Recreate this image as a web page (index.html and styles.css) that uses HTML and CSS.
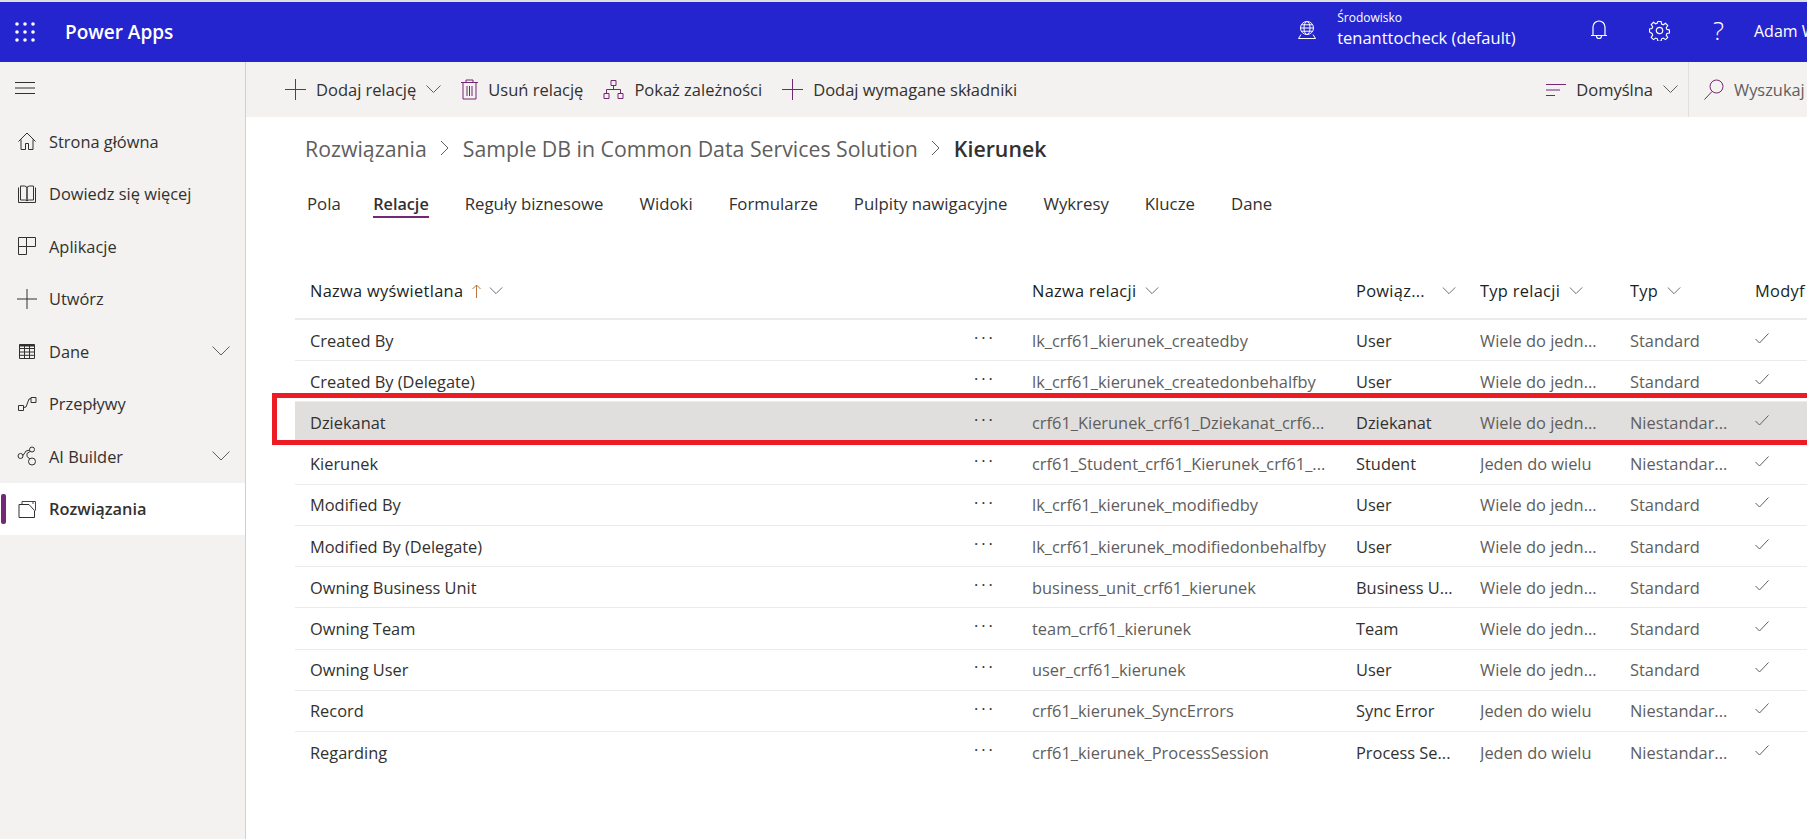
FILE: index.html
```html
<!DOCTYPE html>
<html lang="pl">
<head>
  <meta charset="UTF-8">
  <title>Kierunek | Power Apps</title>
  <link rel="stylesheet" href="styles.css">
</head>
<body>
  <!-- Top bar -->
  <header class="topbar">
    <svg class="waffle" width="20" height="20" viewBox="0 0 20 20" fill="#fff">
      <circle cx="2" cy="2" r="1.8"/><circle cx="10" cy="2" r="1.8"/><circle cx="18" cy="2" r="1.8"/>
      <circle cx="2" cy="10" r="1.8"/><circle cx="10" cy="10" r="1.8"/><circle cx="18" cy="10" r="1.8"/>
      <circle cx="2" cy="18" r="1.8"/><circle cx="10" cy="18" r="1.8"/><circle cx="18" cy="18" r="1.8"/>
    </svg>
    <span class="app-name">Power Apps</span>
    <svg class="env-icon" width="20" height="20" viewBox="0 0 20 20" fill="none" stroke="#fff">
      <circle cx="10" cy="8" r="6.5"/><ellipse cx="10" cy="8" rx="3" ry="6.5"/>
      <path d="M3.5 8h13M4.5 4.8h11M4.5 11.2h11M4 14.5l-2.5 4h17l-2.5-4"/>
    </svg>
    <div class="env">
      <span class="env-label">Środowisko</span>
      <span class="env-name">tenanttocheck (default)</span>
    </div>
    <svg class="bell" width="18" height="22" viewBox="0 0 18 22" fill="none" stroke="#fff" stroke-width="1.2">
      <path d="M3 16V8a6 6 0 0 1 12 0v8M1 16.5h16M6.5 17a2.500 2.500 0 0 0 5 0"/>
    </svg>
    <svg class="gear" width="21" height="21" viewBox="0 0 21 21" fill="none" stroke="#fff" stroke-width="1.2">
      <circle cx="10.5" cy="10.5" r="3.2"/>
      <path d="M8.8 1h3.4l.5 2.7 1.8.8 2.3-1.6 2.4 2.4-1.6 2.3.8 1.8 2.6.5v3.2l-2.6.5-.8 1.8 1.6 2.3-2.4 2.4-2.3-1.6-1.8.8-.5 2.6H8.8l-.5-2.6-1.8-.8-2.3 1.6-2.4-2.4 1.6-2.3-.8-1.8L0 12.1V8.9l2.6-.5.8-1.8-1.6-2.3 2.4-2.4 2.3 1.6 1.8-.8z" transform="translate(.5 .5) scale(.95)"/>
    </svg>
    <span class="help">?</span>
    <span class="user">Adam W</span>
  </header>

  <div class="app">
    <!-- Left navigation -->
    <nav class="sidebar">
      <svg class="hamburger" width="20" height="14" viewBox="0 0 20 14" stroke="#323130">
        <path d="M0 1.5h20M0 7h20M0 12.5h20"/>
      </svg>
      <a class="nav-item">
        <svg width="20" height="20" viewBox="0 0 20 20" fill="none" stroke="#323130"><path d="M1.5 10.5 10 2l8.5 8.500M4 8.500v10h4.500v-6h3v6H16v-10"/></svg>
        <span>Strona główna</span>
      </a>
      <a class="nav-item">
        <svg width="20" height="20" viewBox="0 0 20 20" fill="none" stroke="#323130"><path d="M1.500 3.500v15h17v-15M3.500 2h4a2.500 2.500 0 0 1 2.500 2.500V17a2.500 2.500 0 0 0-2.500-1h-4zM16.500 2h-4A2.500 2.500 0 0 0 10 4.500V17a2.500 2.500 0 0 1 2.500-1h4z"/></svg>
        <span>Dowiedz się więcej</span>
      </a>
      <a class="nav-item">
        <svg width="20" height="20" viewBox="0 0 20 20" fill="none" stroke="#323130"><path d="M1.500 1.500h17v9h-9v8h-8zM9.500 1.500v9h-8"/></svg>
        <span>Aplikacje</span>
      </a>
      <a class="nav-item">
        <svg width="20" height="20" viewBox="0 0 20 20" fill="none" stroke="#323130"><path d="M10 0v20M0 10h20"/></svg>
        <span>Utwórz</span>
      </a>
      <a class="nav-item">
        <svg width="20" height="20" viewBox="0 0 20 20" fill="none" stroke="#323130"><path d="M2.500 3.500h15v14h-15zM2.500 7.500h15M2.500 11h15M2.500 14.300h15M7.500 3.500v14M12.500 3.500v14"/><path d="M2.500 4.500h15" stroke-width="2"/></svg>
        <span>Dane</span>
        <svg class="nav-chevron" width="18" height="10" viewBox="0 0 18 10" fill="none" stroke="#605e5c"><path d="M.5.500 9 9l8.500-8.500"/></svg>
      </a>
      <a class="nav-item">
        <svg width="20" height="20" viewBox="0 0 20 20" fill="none" stroke="#323130"><path d="M1.500 11.500h5v5h-5zM14 3.500h5v5h-5zM6.500 13.500 9 13l3-8 2-.5"/></svg>
        <span>Przepływy</span>
      </a>
      <a class="nav-item">
        <svg width="20" height="20" viewBox="0 0 20 20" fill="none" stroke="#323130"><circle cx="3.500" cy="10" r="2.500"/><circle cx="15" cy="3.500" r="2.500"/><circle cx="15" cy="15.500" r="3.500"/><path d="M6 9.500l3-4.500 4-1M13 5.500l-3 2v3l3 2.500"/></svg>
        <span>AI Builder</span>
        <svg class="nav-chevron" width="18" height="10" viewBox="0 0 18 10" fill="none" stroke="#605e5c"><path d="M.5.500 9 9l8.500-8.500"/></svg>
      </a>
      <a class="nav-item nav-active">
        <svg width="20" height="20" viewBox="0 0 20 20" fill="none" stroke="#323130"><path d="M2 5.500h10l5.500 6v7H2z"/><path d="M5 5V2.500h11V5M16 2.500h2.500v9" stroke="#742774"/></svg>
        <span>Rozwiązania</span>
      </a>
    </nav>

    <main class="content">
      <!-- Command bar -->
      <div class="commands">
        <button class="cmd">
          <svg width="21" height="21" viewBox="0 0 21 21" stroke="#742774"><path d="M10.500 0v21M0 10.500h21"/></svg>
          Dodaj relację
          <svg class="cmd-chevron" width="15" height="9" viewBox="0 0 15 9" fill="none" stroke="#605e5c"><path d="M.5.500l7 7 7-7"/></svg>
        </button>
        <button class="cmd">
          <svg width="17" height="21" viewBox="0 0 17 21" fill="none" stroke="#742774"><path d="M0 3.500h17M5 3.500V1h7v2.500M2 3.500V20h13V3.500M6 7v10M8.500 7v10M11 7v10"/></svg>
          Usuń relację
        </button>
        <button class="cmd">
          <svg width="21" height="21" viewBox="0 0 21 21" fill="none" stroke="#742774"><path d="M8 1.500h5v5H8zM1 14.500h5v5H1zM15 14.500h5v5h-5zM10.500 6.500v4M3.500 14.500v-4h14v4"/></svg>
          Pokaż zależności
        </button>
        <button class="cmd">
          <svg width="21" height="21" viewBox="0 0 21 21" stroke="#742774"><path d="M10.500 0v21M0 10.500h21"/></svg>
          Dodaj wymagane składniki
        </button>
        <button class="cmd cmd-view">
          <svg width="20" height="14" viewBox="0 0 20 14" stroke="#742774"><path d="M0 1.500h20M0 7h14M0 12.500h9"/></svg>
          Domyślna
          <svg class="cmd-chevron" width="15" height="9" viewBox="0 0 15 9" fill="none" stroke="#605e5c"><path d="M.5.500l7 7 7-7"/></svg>
        </button>
        <div class="search">
          <svg width="20" height="21" viewBox="0 0 20 21" fill="none" stroke="#742774"><circle cx="12.500" cy="7.500" r="6.500"/><path d="M8 12.500.5 20.500"/></svg>
          Wyszukaj
        </div>
      </div>

      <div class="page">
        <div class="breadcrumb">
          <span>Rozwiązania</span>
          <svg width="10" height="16" viewBox="0 0 10 16" fill="none" stroke="#605e5c"><path d="M1 1l7 7-7 7"/></svg>
          <span>Sample DB in Common Data Services Solution</span>
          <svg width="10" height="16" viewBox="0 0 10 16" fill="none" stroke="#605e5c"><path d="M1 1l7 7-7 7"/></svg>
          <span class="crumb-current">Kierunek</span>
        </div>

        <div class="tabs">
          <a class="tab">Pola</a>
          <a class="tab tab-active">Relacje</a>
          <a class="tab">Reguły biznesowe</a>
          <a class="tab">Widoki</a>
          <a class="tab">Formularze</a>
          <a class="tab">Pulpity nawigacyjne</a>
          <a class="tab">Wykresy</a>
          <a class="tab">Klucze</a>
          <a class="tab">Dane</a>
        </div>

        <div class="grid">
          <div class="row head">
            <div class="c-name">Nazwa wyświetlana
              <svg class="sort" width="9" height="14" viewBox="0 0 9 14" fill="none" stroke="#b5763f"><path d="M4.500 14V1M.5 5l4-4 4 4"/></svg>
              <svg width="14" height="8" viewBox="0 0 15 9" fill="none" stroke="#605e5c"><path d="M.5.500l7 7 7-7"/></svg></div>
            <div></div>
            <div>Nazwa relacji <svg width="14" height="8" viewBox="0 0 15 9" fill="none" stroke="#605e5c"><path d="M.5.500l7 7 7-7"/></svg></div>
            <div class="c-linked">Powiąz...<svg width="14" height="8" viewBox="0 0 15 9" fill="none" stroke="#605e5c"><path d="M.5.500l7 7 7-7"/></svg></div>
            <div>Typ relacji <svg width="14" height="8" viewBox="0 0 15 9" fill="none" stroke="#605e5c"><path d="M.5.500l7 7 7-7"/></svg></div>
            <div>Typ <svg width="14" height="8" viewBox="0 0 15 9" fill="none" stroke="#605e5c"><path d="M.5.500l7 7 7-7"/></svg></div>
            <div>Modyf</div>
          </div>

          <div class="row">
            <div>Created By</div><div class="more">···</div><div class="muted">lk_crf61_kierunek_createdby</div><div>User</div><div class="muted">Wiele do jedn...</div><div class="muted">Standard</div>
            <div><svg class="check" width="14" height="11" viewBox="0 0 14 11" fill="none" stroke="#605e5c"><path d="M.5 6l4 4 9-9.500"/></svg></div>
          </div>
          <div class="row">
            <div>Created By (Delegate)</div><div class="more">···</div><div class="muted">lk_crf61_kierunek_createdonbehalfby</div><div>User</div><div class="muted">Wiele do jedn...</div><div class="muted">Standard</div>
            <div><svg class="check" width="14" height="11" viewBox="0 0 14 11" fill="none" stroke="#605e5c"><path d="M.5 6l4 4 9-9.500"/></svg></div>
          </div>
          <div class="row row-selected">
            <div>Dziekanat</div><div class="more">···</div><div class="muted">crf61_Kierunek_crf61_Dziekanat_crf6...</div><div>Dziekanat</div><div class="muted">Wiele do jedn...</div><div class="muted">Niestandar...</div>
            <div><svg class="check" width="14" height="11" viewBox="0 0 14 11" fill="none" stroke="#605e5c"><path d="M.5 6l4 4 9-9.500"/></svg></div>
          </div>
          <div class="row">
            <div>Kierunek</div><div class="more">···</div><div class="muted">crf61_Student_crf61_Kierunek_crf61_...</div><div>Student</div><div class="muted">Jeden do wielu</div><div class="muted">Niestandar...</div>
            <div><svg class="check" width="14" height="11" viewBox="0 0 14 11" fill="none" stroke="#605e5c"><path d="M.5 6l4 4 9-9.500"/></svg></div>
          </div>
          <div class="row">
            <div>Modified By</div><div class="more">···</div><div class="muted">lk_crf61_kierunek_modifiedby</div><div>User</div><div class="muted">Wiele do jedn...</div><div class="muted">Standard</div>
            <div><svg class="check" width="14" height="11" viewBox="0 0 14 11" fill="none" stroke="#605e5c"><path d="M.5 6l4 4 9-9.500"/></svg></div>
          </div>
          <div class="row">
            <div>Modified By (Delegate)</div><div class="more">···</div><div class="muted">lk_crf61_kierunek_modifiedonbehalfby</div><div>User</div><div class="muted">Wiele do jedn...</div><div class="muted">Standard</div>
            <div><svg class="check" width="14" height="11" viewBox="0 0 14 11" fill="none" stroke="#605e5c"><path d="M.5 6l4 4 9-9.500"/></svg></div>
          </div>
          <div class="row">
            <div>Owning Business Unit</div><div class="more">···</div><div class="muted">business_unit_crf61_kierunek</div><div>Business U...</div><div class="muted">Wiele do jedn...</div><div class="muted">Standard</div>
            <div><svg class="check" width="14" height="11" viewBox="0 0 14 11" fill="none" stroke="#605e5c"><path d="M.5 6l4 4 9-9.500"/></svg></div>
          </div>
          <div class="row">
            <div>Owning Team</div><div class="more">···</div><div class="muted">team_crf61_kierunek</div><div>Team</div><div class="muted">Wiele do jedn...</div><div class="muted">Standard</div>
            <div><svg class="check" width="14" height="11" viewBox="0 0 14 11" fill="none" stroke="#605e5c"><path d="M.5 6l4 4 9-9.500"/></svg></div>
          </div>
          <div class="row">
            <div>Owning User</div><div class="more">···</div><div class="muted">user_crf61_kierunek</div><div>User</div><div class="muted">Wiele do jedn...</div><div class="muted">Standard</div>
            <div><svg class="check" width="14" height="11" viewBox="0 0 14 11" fill="none" stroke="#605e5c"><path d="M.5 6l4 4 9-9.500"/></svg></div>
          </div>
          <div class="row">
            <div>Record</div><div class="more">···</div><div class="muted">crf61_kierunek_SyncErrors</div><div>Sync Error</div><div class="muted">Jeden do wielu</div><div class="muted">Niestandar...</div>
            <div><svg class="check" width="14" height="11" viewBox="0 0 14 11" fill="none" stroke="#605e5c"><path d="M.5 6l4 4 9-9.500"/></svg></div>
          </div>
          <div class="row row-last">
            <div>Regarding</div><div class="more">···</div><div class="muted">crf61_kierunek_ProcessSession</div><div>Process Se...</div><div class="muted">Jeden do wielu</div><div class="muted">Niestandar...</div>
            <div><svg class="check" width="14" height="11" viewBox="0 0 14 11" fill="none" stroke="#605e5c"><path d="M.5 6l4 4 9-9.500"/></svg></div>
          </div>

          <!-- red annotation drawn over the screenshot -->
          <div class="callout"></div>
        </div>
      </div>
    </main>
  </div>
</body>
</html>
```

FILE: styles.css
```css
* {
  box-sizing: border-box;
}

html, body {
  height: 100%;
}

body {
  margin: 0;
  overflow: hidden;
  padding-top: 2px;
  background: #e1dfdd;
  font-family: "Open Sans", "Liberation Sans", sans-serif;
  font-size: 16.400px;
  color: #323130;
}

svg {
  flex: none;
}

/* top bar */
.topbar {
  display: flex;
  align-items: center;
  height: 60px;
  padding-left: 15px;
  background: #2525cf;
  color: #fff;
  white-space: nowrap;
  overflow: hidden;
}

.app-name {
  margin-left: 30px;
  font-size: 19px;
  font-weight: 600;
}

.env-icon {
  margin-left: auto;
  margin-bottom: 4px;
}

.env {
  display: flex;
  flex-direction: column;
  margin-left: 20px;
  margin-bottom: 6px;
  line-height: 18px;
}

.env-label {
  font-size: 12px;
}

.env-name {
  font-size: 16.500px;
  line-height: 22px;
}

.bell {
  margin-left: 74px;
  margin-bottom: 4px;
}

.gear {
  margin-left: 41px;
  margin-bottom: 4px;
}

.help {
  margin-left: 43.500px;
  margin-bottom: 4px;
  font-size: 26px;
  font-weight: 300;
}

.user {
  flex: none;
  width: 53px;
  margin-left: 30px;
  margin-bottom: 2px;
  font-size: 16px;
}

.app {
  display: flex;
  height: 777px;
  background: #fff;
}

/* sidebar */
.sidebar {
  flex: none;
  width: 246px;
  padding-top: 19px;
  background: #f3f2f1;
  border-right: 1px solid #d2d0ce;
}

.hamburger {
  display: block;
  margin: 0 0 20px 15px;
}

.nav-item {
  display: flex;
  align-items: center;
  height: 52.500px;
  padding-left: 17px;
}

.nav-item span {
  margin-left: 12px;
}

.nav-chevron {
  margin-left: auto;
  margin-right: 15px;
}

.nav-active {
  position: relative;
  background: #fff;
  font-weight: 600;
}

.nav-active::before {
  content: "";
  position: absolute;
  left: 1px;
  top: 11px;
  width: 5px;
  height: 30px;
  border-radius: 2px;
  background: #742774;
}

/* command bar */
.content {
  flex: 1;
  min-width: 0;
}

.commands {
  display: flex;
  align-items: center;
  height: 55px;
  padding-left: 39px;
  background: #f3f2f1;
}

.cmd {
  display: flex;
  align-items: center;
  gap: 10px;
  margin-right: 20px;
  padding: 0;
  border: none;
  background: none;
  font: inherit;
  font-size: 16.500px;
  color: #323130;
  white-space: nowrap;
}

.cmd-view {
  margin-left: auto;
  margin-right: 0;
}

.search {
  display: flex;
  align-items: center;
  gap: 10px;
  flex: none;
  width: 119px;
  height: 100%;
  margin-left: 10px;
  padding-left: 15px;
  border-left: 1px solid #e1dfdd;
  color: #605e5c;
  white-space: nowrap;
}

/* breadcrumb and tabs */
.page {
  padding-left: 49px;
}

.breadcrumb {
  display: flex;
  align-items: center;
  gap: 13px;
  height: 62px;
  margin-bottom: 2px;
  padding-left: 10px;
  font-size: 21.300px;
  color: #605e5c;
  white-space: nowrap;
}

.crumb-current {
  font-weight: 600;
  color: #323130;
}

.tabs {
  display: flex;
  gap: 36px;
  height: 82px;
  padding-left: 12px;
  padding-top: 9px;
  font-size: 16.800px;
}

.tab {
  height: 28px;
  line-height: 28px;
}

.tab-active {
  margin-left: -3.500px;
  font-size: 16.200px;
  font-weight: 600;
  border-bottom: 2px solid #742774;
}

/* grid */
.grid {
  position: relative;
}

.row {
  display: grid;
  grid-template-columns: 658px 64px 324px 124px 150px 125px 120px;
  align-items: center;
  height: 41.200px;
  padding-left: 15px;
  border-bottom: 1px solid #edebe9;
  white-space: nowrap;
}

.row > div {
  overflow: hidden;
}

.head {
  height: 57px;
  border-bottom: 2px solid #edebe9;
  font-weight: 500;
  letter-spacing: 0.3px;
  color: #201f1e;
}

.head svg {
  margin-left: 4px;
  vertical-align: 2px;
}

.head .sort {
  vertical-align: -1px;
}

.c-linked {
  display: flex;
  align-items: center;
  justify-content: space-between;
  padding-right: 24px;
}

.muted {
  color: #605e5c;
}

.row > .more {
  overflow: visible;
  padding-left: 6px;
  margin-bottom: 4px;
  letter-spacing: 3px;
  line-height: 1;
  color: #323130;
}

.check {
  display: block;
  margin-bottom: 4px;
}

.row-selected {
  background: #e1dfdd;
}

.row-last {
  border-bottom: none;
}

.callout {
  position: absolute;
  left: -23px;
  right: 0;
  top: 130px;
  height: 52px;
  border: 5px solid #ed1c24;
  border-right: none;
}
```
